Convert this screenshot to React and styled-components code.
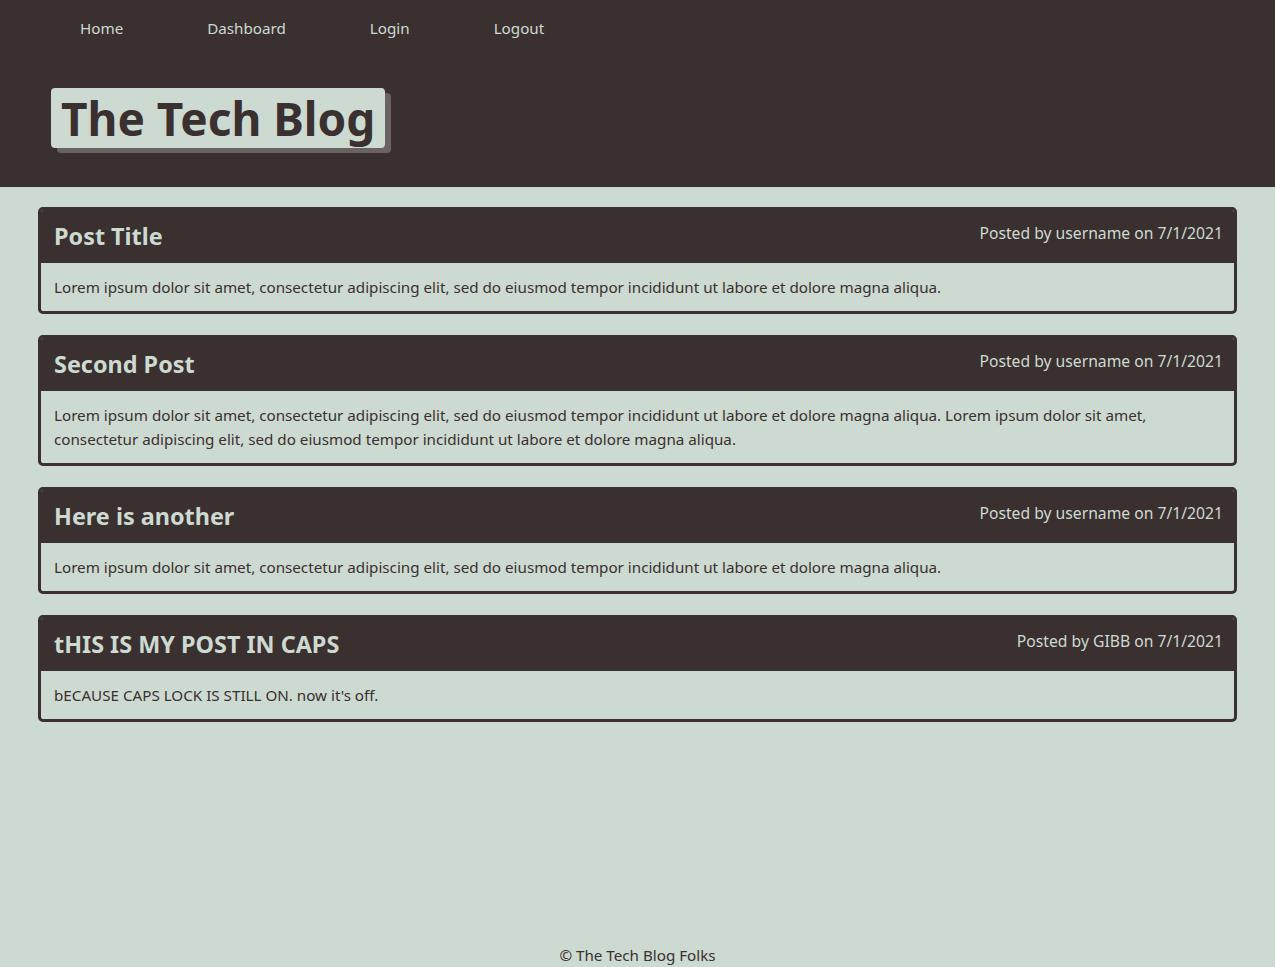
import React from "react";
import styled, { createGlobalStyle } from "styled-components";

const dark = "#3a3030";
const light = "#cddad1";

const GlobalStyle = createGlobalStyle`
  * {
    box-sizing: border-box;
  }
  body {
    margin: 0;
    background: ${light};
    color: ${dark};
    font-family: "Noto Sans", "Open Sans", sans-serif;
  }
`;

const Page = styled.div`
  min-height: 100vh;
  display: flex;
  flex-direction: column;
`;

const Header = styled.header`
  background: ${dark};
  padding-bottom: 39px;
`;

const Nav = styled.nav`
  display: flex;
  padding: 16px 38px;
`;

const NavLink = styled.a`
  padding: 0 42px;
  font-size: 15.2px;
  line-height: 24px;
  color: ${light};
  text-decoration: none;
`;

// 제목 박스 (그림자 포함)
const Title = styled.h1`
  display: inline-block;
  margin: 32px 0 0 51px;
  padding: 0 10px;
  font-size: 46px;
  line-height: 60px;
  font-weight: 700;
  color: ${dark};
  background: ${light};
  border-radius: 4px;
  box-shadow: 6px 5px 0 #6b6262;
`;

const Main = styled.main`
  flex: 1;
  padding: 20px 38px;
  display: flex;
  flex-direction: column;
  gap: 21px;
`;

const Card = styled.article`
  border: 3px solid ${dark};
  border-radius: 5px;
  overflow: hidden;
`;

const CardHeader = styled.div`
  display: flex;
  justify-content: space-between;
  align-items: flex-start;
  padding: 10px 11px 10px 13px;
  background: ${dark};
  color: ${light};
`;

const PostTitle = styled.h2`
  margin: 0;
  font-size: 23.4px;
  line-height: 33px;
  font-weight: 700;
`;

const Meta = styled.span`
  font-size: 15.7px;
  line-height: 26px;
`;

const CardBody = styled.p`
  margin: 0;
  padding: 12px 13px;
  font-size: 15.2px;
  line-height: 24px;
`;

const Footer = styled.footer`
  text-align: center;
  font-size: 15.2px;
  line-height: 24px;
`;

const lorem =
  "Lorem ipsum dolor sit amet, consectetur adipiscing elit, sed do eiusmod tempor incididunt ut labore et dolore magna aliqua.";

const posts = [
  { title: "Post Title", author: "username", date: "7/1/2021", body: lorem },
  { title: "Second Post", author: "username", date: "7/1/2021", body: `${lorem} ${lorem}` },
  { title: "Here is another", author: "username", date: "7/1/2021", body: lorem },
  {
    title: "tHIS IS MY POST IN CAPS",
    author: "GIBB",
    date: "7/1/2021",
    body: "bECAUSE CAPS LOCK IS STILL ON. now it's off.",
  },
];

export default function App() {
  return (
    <Page>
      <GlobalStyle />
      <Header>
        <Nav>
          <NavLink href="#">Home</NavLink>
          <NavLink href="#">Dashboard</NavLink>
          <NavLink href="#">Login</NavLink>
          <NavLink href="#">Logout</NavLink>
        </Nav>
        <Title>The Tech Blog</Title>
      </Header>
      <Main>
        {posts.map((post, index) => (
          <Card key={index}>
            <CardHeader>
              <PostTitle>{post.title}</PostTitle>
              <Meta>
                Posted by {post.author} on {post.date}
              </Meta>
            </CardHeader>
            <CardBody>{post.body}</CardBody>
          </Card>
        ))}
      </Main>
      <Footer>© The Tech Blog Folks</Footer>
    </Page>
  );
}
